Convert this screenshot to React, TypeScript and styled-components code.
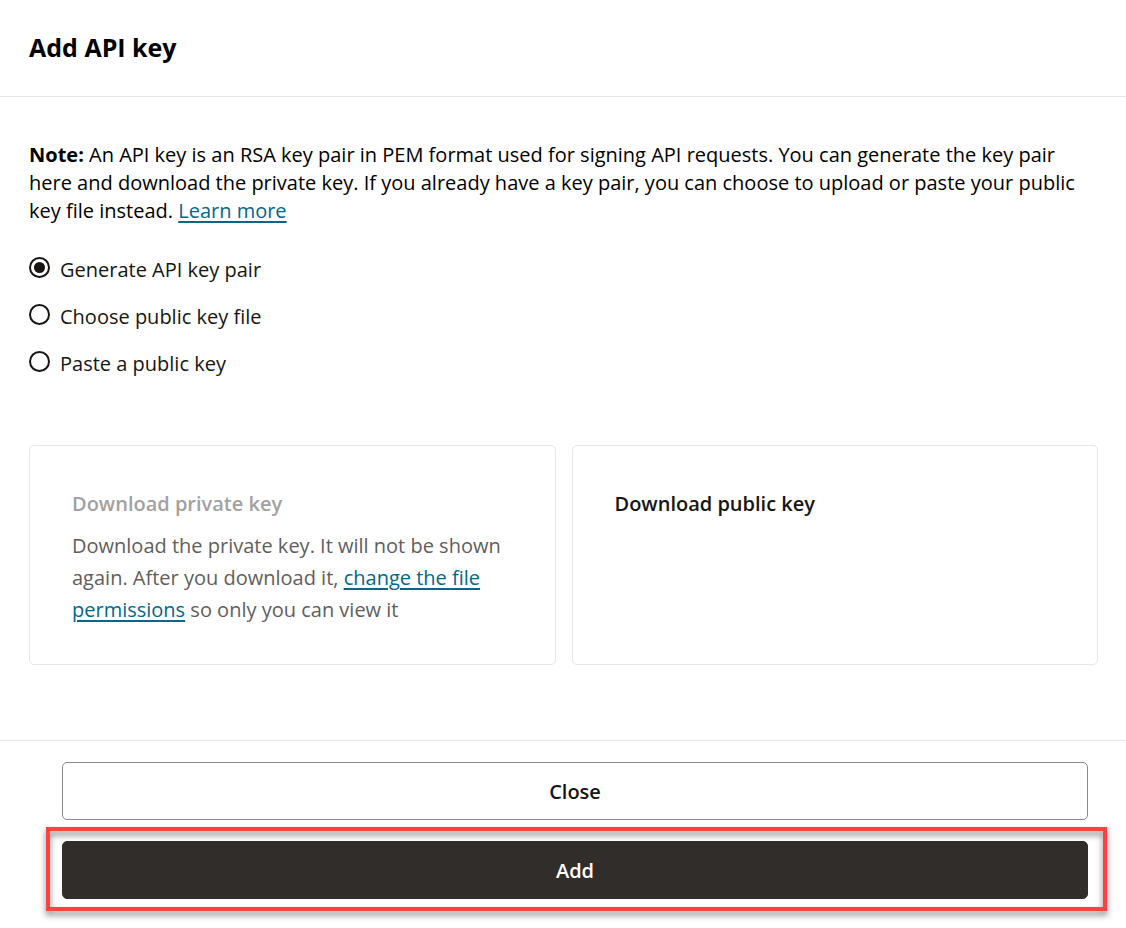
import React, { useState } from "react";
import styled, { createGlobalStyle } from "styled-components";

const GlobalStyle = createGlobalStyle`
  *, *::before, *::after { box-sizing: border-box; }
  body {
    margin: 0;
    background: #fff;
    color: #000;
    font-family: "Segoe UI", "Open Sans", "Noto Sans", sans-serif;
    font-size: 20px;
    line-height: 28px;
  }
`;

const Panel = styled.main`
  display: flex;
  flex-direction: column;
`;

const Header = styled.header`
  padding: 31px 29px 33px;
  border-bottom: 1px solid #e6e6e6;
`;

const Title = styled.h1`
  margin: 0;
  font-size: 25px;
  line-height: 32px;
  font-weight: 700;
`;

const Content = styled.section`
  padding: 44px 28px 75px 29px;
`;

const Note = styled.p`
  margin: 0;
`;

const Link = styled.a`
  color: #00688c;
  text-decoration: underline;
  text-decoration-thickness: 2px;
  text-underline-offset: 3px;
`;

const RadioGroup = styled.fieldset`
  display: flex;
  flex-direction: column;
  gap: 17px;
  margin: 30px 0 0;
  padding: 0;
  border: 0;
  line-height: 30px;
  color: #161513;
`;

const RadioRow = styled.label`
  display: flex;
  align-items: flex-start;
  gap: 10px;
  cursor: pointer;
`;

const Radio = styled.input`
  appearance: none;
  flex: none;
  display: grid;
  place-items: center;
  width: 21px;
  height: 21px;
  margin: 2px 0 0;
  border: 2px solid #161513;
  border-radius: 50%;

  &:checked::before {
    content: "";
    width: 11px;
    height: 11px;
    border-radius: 50%;
    background: #161513;
  }
`;

const Cards = styled.div`
  display: grid;
  grid-template-columns: repeat(auto-fit, minmax(320px, 1fr));
  gap: 16px;
  margin-top: 66px;
`;

const Card = styled.article`
  padding: 42px 42px 38px;
  border: 1px solid #e6e6e6;
  border-radius: 5px;
`;

const CardTitle = styled.button<{ $muted?: boolean }>`
  display: block;
  padding: 0;
  border: 0;
  background: none;
  font: inherit;
  line-height: 32px;
  font-weight: 600;
  color: ${({ $muted }) => ($muted ? "#a2a1a0" : "#161513")};
`;

const CardText = styled.p`
  margin: 10px 0 0;
  line-height: 32px;
  color: #5f5e5d;
`;

const Footer = styled.footer`
  display: flex;
  flex-direction: column;
  gap: 21px;
  padding: 21px 38px 29px 62px;
  border-top: 1px solid #e6e6e6;
`;

const ActionButton = styled.button<{ $primary?: boolean }>`
  width: 100%;
  height: 58px;
  padding: 2px 0 0;
  border: 1px solid ${({ $primary }) => ($primary ? "#312d2a" : "#8b8a89")};
  border-radius: 5px;
  background: ${({ $primary }) => ($primary ? "#312d2a" : "#fff")};
  color: ${({ $primary }) => ($primary ? "#fff" : "#161513")};
  font: inherit;
  font-weight: 600;
  cursor: pointer;
`;

const Highlight = styled.div`
  position: relative;

  &::after {
    content: "";
    position: absolute;
    inset: -14px -19px -12px -16px;
    border: 4px solid #ff4141;
    filter: drop-shadow(0 4px 3px rgba(0, 0, 0, 0.5));
    pointer-events: none;
  }
`;

const options = [
  "Generate API key pair",
  "Choose public key file",
  "Paste a public key",
];

export default function App() {
  const [selected, setSelected] = useState(options[0]);

  return (
    <>
      <GlobalStyle />
      <Panel>
        <Header>
          <Title>Add API key</Title>
        </Header>
        <Content>
          <Note>
            <strong>Note:</strong> An API key is an RSA key pair in PEM format
            used for signing API requests. You can generate the key pair here
            and download the private key. If you already have a key pair, you
            can choose to upload or paste your public key file instead.{" "}
            <Link href="#learn-more">Learn more</Link>
          </Note>
          <RadioGroup aria-label="API key source">
            {options.map((option) => (
              <RadioRow key={option}>
                <Radio
                  type="radio"
                  name="key-source"
                  checked={selected === option}
                  onChange={() => setSelected(option)}
                />
                {option}
              </RadioRow>
            ))}
          </RadioGroup>
          <Cards>
            <Card>
              <CardTitle type="button" $muted disabled>
                Download private key
              </CardTitle>
              <CardText>
                Download the private key. It will not be shown again. After you
                download it,{" "}
                <Link href="#file-permissions">change the file permissions</Link>{" "}
                so only you can view it
              </CardText>
            </Card>
            <Card>
              <CardTitle type="button">Download public key</CardTitle>
            </Card>
          </Cards>
        </Content>
        <Footer>
          <ActionButton type="button">Close</ActionButton>
          <Highlight>
            <ActionButton type="button" $primary>
              Add
            </ActionButton>
          </Highlight>
        </Footer>
      </Panel>
    </>
  );
}
